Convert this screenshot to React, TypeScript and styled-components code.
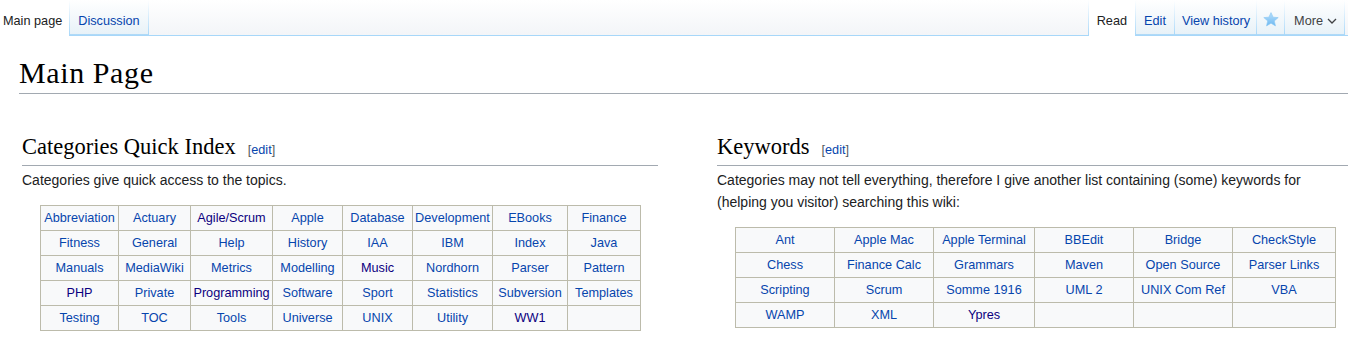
import React from "react";
import styled, { createGlobalStyle } from "styled-components";

const GlobalStyle = createGlobalStyle`
  html, body { margin: 0; padding: 0; background: #ffffff; }
  body { font-family: "Liberation Sans", Arial, sans-serif; color: #202122; }
  * { box-sizing: border-box; }
`;

const LINK = "#0645ad";
const VISITED = "#0b0080";
const TAB_BORDER = "#a7d7f9";

const TabBar = styled.nav`
  display: flex;
  height: 36px;
  font-size: 12.7px;
`;

const Tab = styled.a<{ $selected?: boolean; $pl?: number; $pr?: number }>`
  display: flex;
  align-items: center;
  gap: 4px;
  height: 36px;
  padding: 6px ${(p) => p.$pr ?? 8}px 0 ${(p) => p.$pl ?? 8}px;
  white-space: nowrap;
  text-decoration: none;
  cursor: pointer;
  color: ${(p) => (p.$selected ? "#202122" : LINK)};
  background: ${(p) =>
    p.$selected
      ? "#ffffff"
      : "linear-gradient(to top, #77c1f6 0, #e8f2f8 1px, #ffffff 100%)"};
  border-bottom: ${(p) => (p.$selected ? "none" : `1px solid ${TAB_BORDER}`)};
`;

const MoreTab = styled(Tab)`
  color: #404244;
`;

const Sep = styled.span`
  width: 1px;
  height: 36px;
  flex: none;
  background: linear-gradient(to bottom, rgba(167, 215, 249, 0) 0, ${TAB_BORDER} 100%);
`;

const Filler = styled.div<{ $grow?: boolean }>`
  flex: ${(p) => (p.$grow ? "1 1 auto" : "0 0 3px")};
  height: 36px;
  background: linear-gradient(to bottom, #ffffff 0, #f3f5f8 100%);
  border-bottom: 1px solid ${TAB_BORDER};
`;

const Content = styled.main`
  padding: 0 0 0 18px;
`;

const PageTitle = styled.h1`
  margin: 17px 0 0 1px;
  padding: 0 0 1px 0;
  font-family: "Liberation Serif", "Times New Roman", serif;
  font-weight: normal;
  font-size: 30px;
  letter-spacing: 0.6px;
  line-height: 39px;
  color: #000;
  border-bottom: 1px solid #a2a9b1;
`;

const Columns = styled.div`
  display: grid;
  grid-template-columns: 636px 1fr;
  column-gap: 59px;
  padding-left: 4px;
`;

const Column = styled.section`
  min-width: 0;
`;

const SectionHeading = styled.h2`
  margin: 38px 0 0 0;
  padding: 0;
  font-family: "Liberation Serif", "Times New Roman", serif;
  font-weight: normal;
  font-size: 22.5px;
  line-height: 29px;
  color: #000;
  border-bottom: 1px solid #a2a9b1;
  display: flex;
  align-items: baseline;
`;

const EditLink = styled.span`
  font-family: "Liberation Sans", Arial, sans-serif;
  font-size: 12.7px;
  color: #54595d;
  margin-left: 12px;
  & a { color: ${LINK}; text-decoration: none; }
`;

const Para = styled.p`
  margin: 3px 0 14px 0;
  font-size: 14px;
  line-height: 22px;
  color: #202122;
`;

const Table = styled.table<{ $width: number }>`
  margin-left: 18px;
  width: ${(p) => p.$width}px;
  border-collapse: collapse;
  table-layout: fixed;
  background: #f8f9fa;
  font-size: 12.7px;
`;

const Cell = styled.td`
  border: 1px solid #bcbbab;
  height: 25px;
  padding: 0 2px;
  text-align: center;
  white-space: nowrap;
  line-height: 24px;
  overflow: hidden;
`;

const CellLink = styled.a<{ $visited?: boolean }>`
  color: ${(p) => (p.$visited ? VISITED : LINK)};
  text-decoration: none;
`;

const StarSvg = () => (
  <svg width="16" height="15" viewBox="0 0 16 15" style={{ display: "block", marginTop: -2 }}>
    <defs>
      <linearGradient id="starg" x1="0" y1="0" x2="0" y2="1">
        <stop offset="0" stopColor="#b8e0fc" />
        <stop offset="1" stopColor="#6db8f1" />
      </linearGradient>
    </defs>
    <path
      d="M8 0.6 L10.1 5.2 L15.2 5.6 L11.3 8.9 L12.5 13.9 L8 11.2 L3.5 13.9 L4.7 8.9 L0.8 5.6 L5.9 5.2 Z"
      fill="url(#starg)"
      stroke="#8ac7f4"
      strokeWidth="0.6"
      strokeLinejoin="round"
    />
  </svg>
);

const Chevron = () => (
  <svg width="10" height="6" viewBox="0 0 10 6" style={{ display: "block", marginTop: 1 }}>
    <path d="M1 1 L5 5 L9 1" fill="none" stroke="#404244" strokeWidth="1.3" />
  </svg>
);

type Item = { t: string; v?: boolean } | null;

const catRows: Item[][] = [
  [{ t: "Abbreviation" }, { t: "Actuary" }, { t: "Agile/Scrum", v: true }, { t: "Apple" }, { t: "Database" }, { t: "Development" }, { t: "EBooks" }, { t: "Finance" }],
  [{ t: "Fitness" }, { t: "General" }, { t: "Help" }, { t: "History" }, { t: "IAA" }, { t: "IBM" }, { t: "Index" }, { t: "Java" }],
  [{ t: "Manuals" }, { t: "MediaWiki" }, { t: "Metrics" }, { t: "Modelling" }, { t: "Music", v: true }, { t: "Nordhorn" }, { t: "Parser" }, { t: "Pattern" }],
  [{ t: "PHP", v: true }, { t: "Private" }, { t: "Programming", v: true }, { t: "Software" }, { t: "Sport" }, { t: "Statistics" }, { t: "Subversion" }, { t: "Templates" }],
  [{ t: "Testing" }, { t: "TOC" }, { t: "Tools" }, { t: "Universe" }, { t: "UNIX" }, { t: "Utility" }, { t: "WW1", v: true }, null],
];
const catCols = [78, 72, 82, 70, 70, 80, 75, 73];

const kwRows: Item[][] = [
  [{ t: "Ant" }, { t: "Apple Mac" }, { t: "Apple Terminal" }, { t: "BBEdit" }, { t: "Bridge" }, { t: "CheckStyle" }],
  [{ t: "Chess" }, { t: "Finance Calc" }, { t: "Grammars" }, { t: "Maven" }, { t: "Open Source" }, { t: "Parser Links" }],
  [{ t: "Scripting" }, { t: "Scrum" }, { t: "Somme 1916" }, { t: "UML 2" }, { t: "UNIX Com Ref" }, { t: "VBA" }],
  [{ t: "WAMP" }, { t: "XML" }, { t: "Ypres", v: true }, null, null, null],
];
const kwCols = [99, 99, 101, 99, 99, 103];

const LinkTable = ({ rows, cols }: { rows: Item[][]; cols: number[] }) => (
  <Table $width={cols.reduce((a, b) => a + b, 0)}>
    <colgroup>
      {cols.map((w, i) => (
        <col key={i} style={{ width: w }} />
      ))}
    </colgroup>
    <tbody>
      {rows.map((r, i) => (
        <tr key={i}>
          {r.map((c, j) => (
            <Cell key={j}>{c ? <CellLink href="#" $visited={c.v}>{c.t}</CellLink> : null}</Cell>
          ))}
        </tr>
      ))}
    </tbody>
  </Table>
);

export default function App() {
  return (
    <>
      <GlobalStyle />
      <TabBar>
        <Tab $selected $pl={3} $pr={7}>Main page</Tab>
        <Sep />
        <Tab>Discussion</Tab>
        <Sep />
        <Filler $grow />
        <Sep />
        <Tab $selected>Read</Tab>
        <Sep />
        <Tab>Edit</Tab>
        <Sep />
        <Tab $pl={7} $pr={6}>View history</Tab>
        <Sep />
        <Tab $pl={6} $pr={5}><StarSvg /></Tab>
        <Sep />
        <MoreTab $pl={9} $pr={7}>More <Chevron /></MoreTab>
        <Sep />
        <Filler />
      </TabBar>
      <Content>
        <PageTitle>Main Page</PageTitle>
        <Columns>
          <Column>
            <SectionHeading>
              Categories Quick Index
              <EditLink>[<a href="#">edit</a>]</EditLink>
            </SectionHeading>
            <Para>Categories give quick access to the topics.</Para>
            <LinkTable rows={catRows} cols={catCols} />
          </Column>
          <Column>
            <SectionHeading>
              Keywords
              <EditLink>[<a href="#">edit</a>]</EditLink>
            </SectionHeading>
            <Para>
              Categories may not tell everything, therefore I give another list containing (some) keywords for
              (helping you visitor) searching this wiki:
            </Para>
            <LinkTable rows={kwRows} cols={kwCols} />
          </Column>
        </Columns>
      </Content>
    </>
  );
}
